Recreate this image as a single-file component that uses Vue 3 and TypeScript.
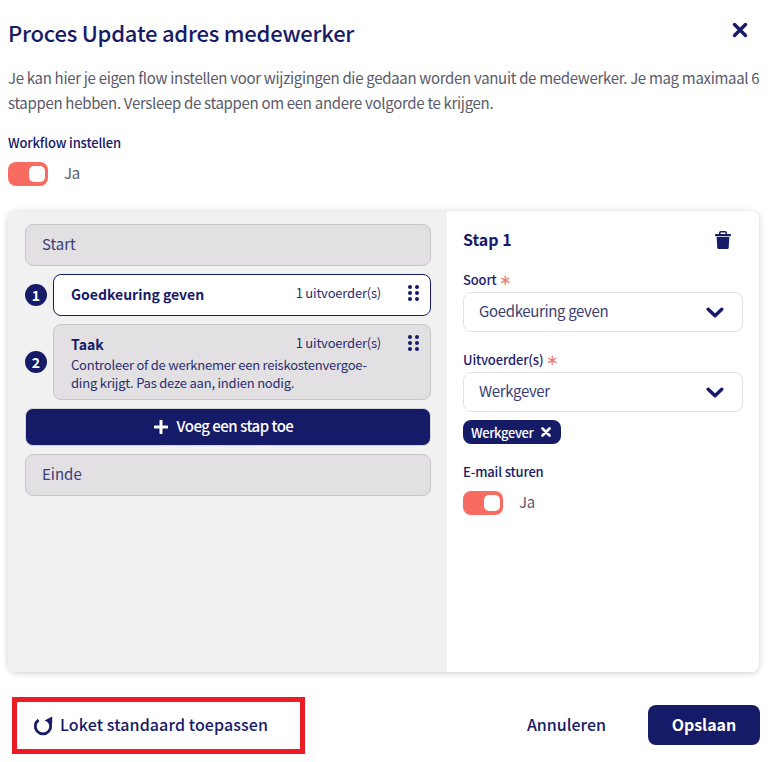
<script setup lang="ts">
interface Step { n: number; title: string; text?: string; active: boolean }
const steps: Step[] = [
  { n: 1, title: 'Goedkeuring geven', active: true },
  { n: 2, title: 'Taak', text: 'Controleer of de werknemer een reiskostenvergoe-\nding krijgt. Pas deze aan, indien nodig.', active: false },
]
</script>

<template>
  <div class="modal">
    <header class="head">
      <h1>Proces Update adres medewerker</h1>
      <svg class="close" viewBox="0 0 16 16" width="16" height="16"><path d="M2.5 2.5l11 11M13.5 2.5l-11 11" stroke="#161b68" stroke-width="3.4" stroke-linecap="round" fill="none"/></svg>
    </header>
    <p class="intro">Je kan hier je eigen flow instellen voor wijzigingen die gedaan worden vanuit de medewerker. Je mag maximaal 6 stappen hebben. Versleep de stappen om een andere volgorde te krijgen.</p>
    <div class="label wf">Workflow instellen</div>
    <div class="toggle-row">
      <span class="toggle"><span class="knob"></span></span><span class="ja">Ja</span>
    </div>

    <section class="card">
      <div class="left">
        <div class="bar">Start</div>
        <div v-for="s in steps" :key="s.n" class="step-row">
          <span class="num">{{ s.n }}</span>
          <div class="step" :class="{ active: s.active }">
            <div class="step-top">
              <span class="step-title">{{ s.title }}</span>
              <span class="count">1 uitvoerder(s)</span>
            </div>
            <div v-if="s.text" class="step-text">{{ s.text }}</div>
            <svg class="drag" viewBox="0 0 11 16" width="11" height="16"><g fill="#161b68"><circle cx="2" cy="2" r="2"/><circle cx="9" cy="2" r="2"/><circle cx="2" cy="8" r="2"/><circle cx="9" cy="8" r="2"/><circle cx="2" cy="14" r="2"/><circle cx="9" cy="14" r="2"/></g></svg>
          </div>
        </div>
        <button class="add">
          <svg viewBox="0 0 14 14" width="14" height="14"><path d="M7 1v12M1 7h12" stroke="#fff" stroke-width="3" stroke-linecap="round"/></svg>
          <span>Voeg een stap toe</span>
        </button>
        <div class="bar">Einde</div>
      </div>
      <div class="right">
        <div class="right-head">
          <h2>Stap 1</h2>
          <svg viewBox="0 0 16 18" width="16" height="18"><path d="M4.8 3V1.8A1 1 0 0 1 5.8.8h4.4a1 1 0 0 1 1 1V3" stroke="#161b68" stroke-width="1.5" fill="none"/><rect x="0" y="3" width="16" height="2.2" rx=".8" fill="#161b68"/><path fill="#161b68" d="M1.6 6h12.8l-.7 10.7a1.4 1.4 0 0 1-1.4 1.3H3.7a1.4 1.4 0 0 1-1.4-1.3z"/></svg>
        </div>
        <div class="field-label">Soort <span class="req">∗</span></div>
        <div class="select">
          <span>Goedkeuring geven</span>
          <svg viewBox="0 0 18 11" width="18" height="11"><path d="M2.2 2.2L9 8.8l6.8-6.6" stroke="#161b68" stroke-width="3.4" stroke-linecap="round" stroke-linejoin="round" fill="none"/></svg>
        </div>
        <div class="field-label second">Uitvoerder(s) <span class="req">∗</span></div>
        <div class="select">
          <span>Werkgever</span>
          <svg viewBox="0 0 18 11" width="18" height="11"><path d="M2.2 2.2L9 8.8l6.8-6.6" stroke="#161b68" stroke-width="3.4" stroke-linecap="round" stroke-linejoin="round" fill="none"/></svg>
        </div>
        <span class="chip">Werkgever
          <svg viewBox="0 0 10 10" width="10" height="10"><path d="M1.5 1.5l7 7M8.5 1.5l-7 7" stroke="#fff" stroke-width="2.6" stroke-linecap="round"/></svg>
        </span>
        <div class="label mail">E-mail sturen</div>
        <div class="toggle-row">
          <span class="toggle"><span class="knob"></span></span><span class="ja">Ja</span>
        </div>
      </div>
    </section>

    <footer class="foot">
      <div class="reset">
        <svg viewBox="0 0 20 20" width="20" height="20"><path d="M5.5 4A7.7 7.7 0 1 0 14.5 4" stroke="#161b68" stroke-width="2.8" fill="none"/><path fill="#161b68" d="M19.2.4v7.6L11.6 4.6z"/></svg>
        <span>Loket standaard toepassen</span>
      </div>
      <div class="actions">
        <span class="cancel">Annuleren</span>
        <button class="save">Opslaan</button>
      </div>
    </footer>
  </div>
</template>

<style>
html, body { margin: 0; background: #fff; }
</style>

<style scoped>
.modal {
  width: 775px;
  height: 762px;
  box-sizing: border-box;
  padding: 18px 15px 0 8px;
  font-family: "Noto Sans CJK SC", "Noto Sans", sans-serif;
  color: #161b68;
  overflow: hidden;
  background: #fff;
}
.head { display: flex; justify-content: space-between; align-items: center; height: 30px; padding-right: 12px; }
h1 { margin: 0; font-size: 22px; letter-spacing: -.23px; line-height: 28px; padding-bottom: 2px; font-weight: 500; }
.close { margin-top: -6px; }
.intro { margin: 17px 0 0; font-size: 15px; letter-spacing: -.31px; line-height: 25px; color: #5a5a6a; width: 755px; }
.label { font-size: 13px; letter-spacing: -.15px; line-height: 20px; font-weight: 500; }
.wf { margin-top: 18px; }
.toggle-row { display: flex; align-items: center; gap: 16px; margin-top: 9px; }
.toggle { width: 40px; height: 24px; border-radius: 8px; background: #f76b61; display: flex; align-items: center; justify-content: flex-end; padding-right: 3px; box-sizing: border-box; }
.knob { width: 16px; height: 16px; border-radius: 5px; background: #fff; }
.ja { font-size: 15px; letter-spacing: -.2px; line-height: 22px; color: #5a5a6a; margin-bottom: 2px; }
.card { margin-top: 25px; height: 461px; width: 751px; display: flex; border-radius: 8px; overflow: hidden; box-shadow: 0 1px 6px rgba(0, 0, 0, .2); }
.left { width: 439px; box-sizing: border-box; background: #f1f1f1; padding: 13px 16px 0 17px; display: flex; flex-direction: column; gap: 8px; }
.bar { height: 42px; box-sizing: border-box; border: 1px solid #c8c5c9; border-radius: 8px; background: #e2e0e3; padding-left: 16px; font-size: 15px; line-height: 38px; color: #3a3d75; }
.step-row { display: flex; align-items: center; gap: 6px; }
.num { width: 22px; height: 22px; border-radius: 50%; background: #161b68; color: #fff; font-size: 14px; font-weight: 700; line-height: 22px; text-align: center; flex: none; }
.step { position: relative; flex: 1; box-sizing: border-box; border: 1px solid #c8c5c9; border-radius: 8px; background: #e2e0e3; padding: 7px 16px 7px 17px; }
.step.active { background: #fff; border-color: #161b68; height: 42px; }
.step.active .step-top { height: 24px; }
.step-top { display: flex; align-items: center; justify-content: space-between; padding-right: 33px; height: 23px; }
.step-title { font-size: 14px; font-weight: 700; }
.count { font-size: 13px; letter-spacing: -.2px; line-height: 20px; color: #2a2e70; margin-top: -2px; }
.step-text { font-size: 13px; letter-spacing: -.22px; line-height: 18px; color: #2a2e70; white-space: pre-line; margin-top: 1px; }
.drag { position: absolute; right: 11px; top: 10px; }
.add { height: 38px; border: 1px solid #d6d5de; border-radius: 8px; background: #161b68; color: #fff; font: inherit; font-size: 15px; letter-spacing: -.5px; font-weight: 500; display: flex; align-items: center; justify-content: center; gap: 9px; padding: 0 9px 0 0; }
.add span { margin-bottom: 4px; }
.right { flex: 1; background: #fff; padding: 13px 16px 0 16px; }
.right-head { display: flex; justify-content: space-between; align-items: center; height: 30px; padding-right: 12px; }
.right-head svg { margin-top: 2px; }
h2 { margin: 0; font-size: 16px; font-weight: 700; line-height: 30px; }
.field-label { font-size: 13px; letter-spacing: -.15px; line-height: 20px; font-weight: 500; margin-top: 16px; color: #1e2270; }
.field-label.second { margin-top: 18px; }
.req { color: #f07c74; font-weight: 400; font-size: 15px; line-height: 14px; }
.select { height: 40px; box-sizing: border-box; border: 1px solid #e2e1e6; border-radius: 8px; padding: 0 18px 0 15px; margin-top: 2px; display: flex; align-items: center; justify-content: space-between; font-size: 15px; letter-spacing: -.35px; color: #3a3d75; }
.select span { margin-bottom: 3px; }
.chip { display: inline-flex; align-items: center; gap: 8px; height: 24px; margin-top: 8px; padding: 0 10px 0 8px; border-radius: 8px; background: #161b68; color: #fff; font-size: 13px; letter-spacing: -.4px; font-weight: 500; }
.mail { margin-top: 18px; }
.foot { display: flex; justify-content: space-between; align-items: center; margin-top: 25px; margin-left: 4px; }
.reset { width: 293px; height: 57px; box-sizing: border-box; border: 5px solid #ed1c24; display: flex; align-items: center; gap: 7px; padding-left: 16px; font-size: 16px; letter-spacing: .1px; font-weight: 500; }
.reset span { margin-bottom: 4px; }
.actions { display: flex; align-items: center; gap: 42px; margin-bottom: 1px; }
.cancel { font-size: 16px; font-weight: 500; margin-bottom: 3px; }
.save { width: 112px; height: 40px; border: none; border-radius: 8px; background: #161b68; color: #fff; font: inherit; font-size: 16px; font-weight: 700; padding: 0 0 2px; }
</style>
